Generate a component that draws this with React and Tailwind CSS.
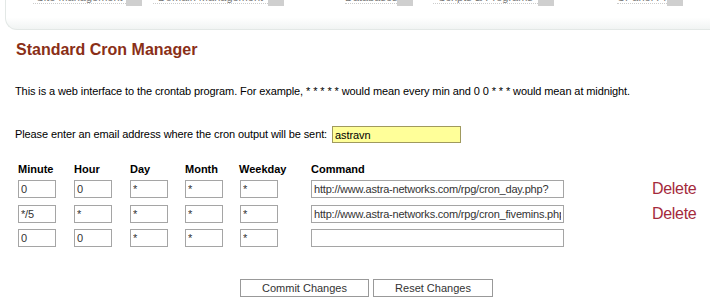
import React from "react";

const navItems = [
  { label: "Site Management", w: "w-[93px]", ml: "ml-[27px]" },
  { label: "Domain Management", w: "w-[115px]", ml: "ml-[11px]" },
  { label: "Databases", w: "w-[52px]", ml: "ml-[61px]" },
  { label: "Scripts & Programs", w: "w-[105px]", ml: "ml-[20px]" },
  { label: "CPanel Pro", w: "w-[50px]", ml: "ml-[63px]" },
];

const rows = [
  ["0", "0", "*", "*", "*", "http://www.astra-networks.com/rpg/cron_day.php?", true],
  ["*/5", "*", "*", "*", "*", "http://www.astra-networks.com/rpg/cron_fivemins.php", true],
  ["0", "0", "*", "*", "*", "", false],
];

function Cell({ v, w }) {
  return (
    <input
      readOnly
      value={v}
      className={`${w} h-[18px] border border-[#a5a5a5] bg-white px-[2px] text-[11px] tracking-[-0.2px] text-[#333] outline-none`}
    />
  );
}

export default function App() {
  return (
    <div className="w-[710px] h-[308px] overflow-hidden bg-white font-['Liberation_Sans',Arial,sans-serif] text-[11px] text-black">
      {/* clipped nav panel */}
      <div className="h-[30px] ml-[5px] rounded-bl-[12px] border-b border-l border-[#e3e8e6] bg-gradient-to-b from-white from-60% to-[#f1f4f3] overflow-hidden">
        <div className="flex items-start -mt-[8px]">
          {navItems.map((n, i) => (
            <div key={i} className={`flex items-start shrink-0 ${n.ml}`}>
              <div className={`${n.w} whitespace-nowrap text-[11px] leading-[11px] text-[#777] text-center border-b border-dotted border-[#ccc]`}>
                {n.label}
              </div>
              <div className="w-[16px] h-[14px] bg-[#cfcfcf]" />
            </div>
          ))}
        </div>
      </div>

      <div className="pl-[16px]">
        <h1 className="mt-[10px] text-[16px] leading-[19px] font-bold text-[#8a2f17]">Standard Cron Manager</h1>
        <p className="mt-[26px] -ml-[1px] leading-[13px] tracking-[-0.1px]">
          This is a web interface to the crontab program. For example, * * * * * would mean every min and 0 0 * * * would mean at midnight.
        </p>
        <div className="mt-[28px] -ml-[1px] flex items-center h-[17px] tracking-[-0.1px]">
          <span>Please enter an email address where the cron output will be sent:</span>
          <input
            readOnly
            value="astravn"
            className="ml-[5px] w-[129px] h-[17px] border border-[#a09a5e] bg-[#ffff99] px-[2px] text-[11px] outline-none"
          />
        </div>

        <div className="mt-[19px] ml-[2px] flex flex-col">
          <div className="flex font-bold h-[14px] leading-[14px]">
            <div className="w-[56px]">Minute</div>
            <div className="w-[56px]">Hour</div>
            <div className="w-[55px]">Day</div>
            <div className="w-[54px]">Month</div>
            <div className="w-[72px]">Weekday</div>
            <div>Command</div>
          </div>
          <div className="mt-[4px] flex flex-col gap-[6.5px]">
            {rows.map((r, i) => (
              <div key={i} className="flex items-center h-[18px]">
                <div className="w-[56px]"><Cell v={r[0]} w="w-[38px]" /></div>
                <div className="w-[56px]"><Cell v={r[1]} w="w-[38px]" /></div>
                <div className="w-[55px]"><Cell v={r[2]} w="w-[38px]" /></div>
                <div className="w-[55px]"><Cell v={r[3]} w="w-[38px]" /></div>
                <div className="w-[71px]"><Cell v={r[4]} w="w-[38px]" /></div>
                <div className="w-[341px]"><Cell v={r[5]} w="w-[253px]" /></div>
                {r[6] && (
                  <span className="text-[16px] leading-[18px] text-[#a42a3c] tracking-[-0.3px]">Delete</span>
                )}
              </div>
            ))}
          </div>
        </div>

        <div className="mt-[32px] ml-[224px] flex gap-[4px]">
          <button className="w-[129px] h-[18px] border border-[#999] bg-white text-[11px] text-[#333] leading-[16px]">Commit Changes</button>
          <button className="w-[120px] h-[18px] border border-[#999] bg-white text-[11px] text-[#333] leading-[16px]">Reset Changes</button>
        </div>
      </div>
    </div>
  );
}
